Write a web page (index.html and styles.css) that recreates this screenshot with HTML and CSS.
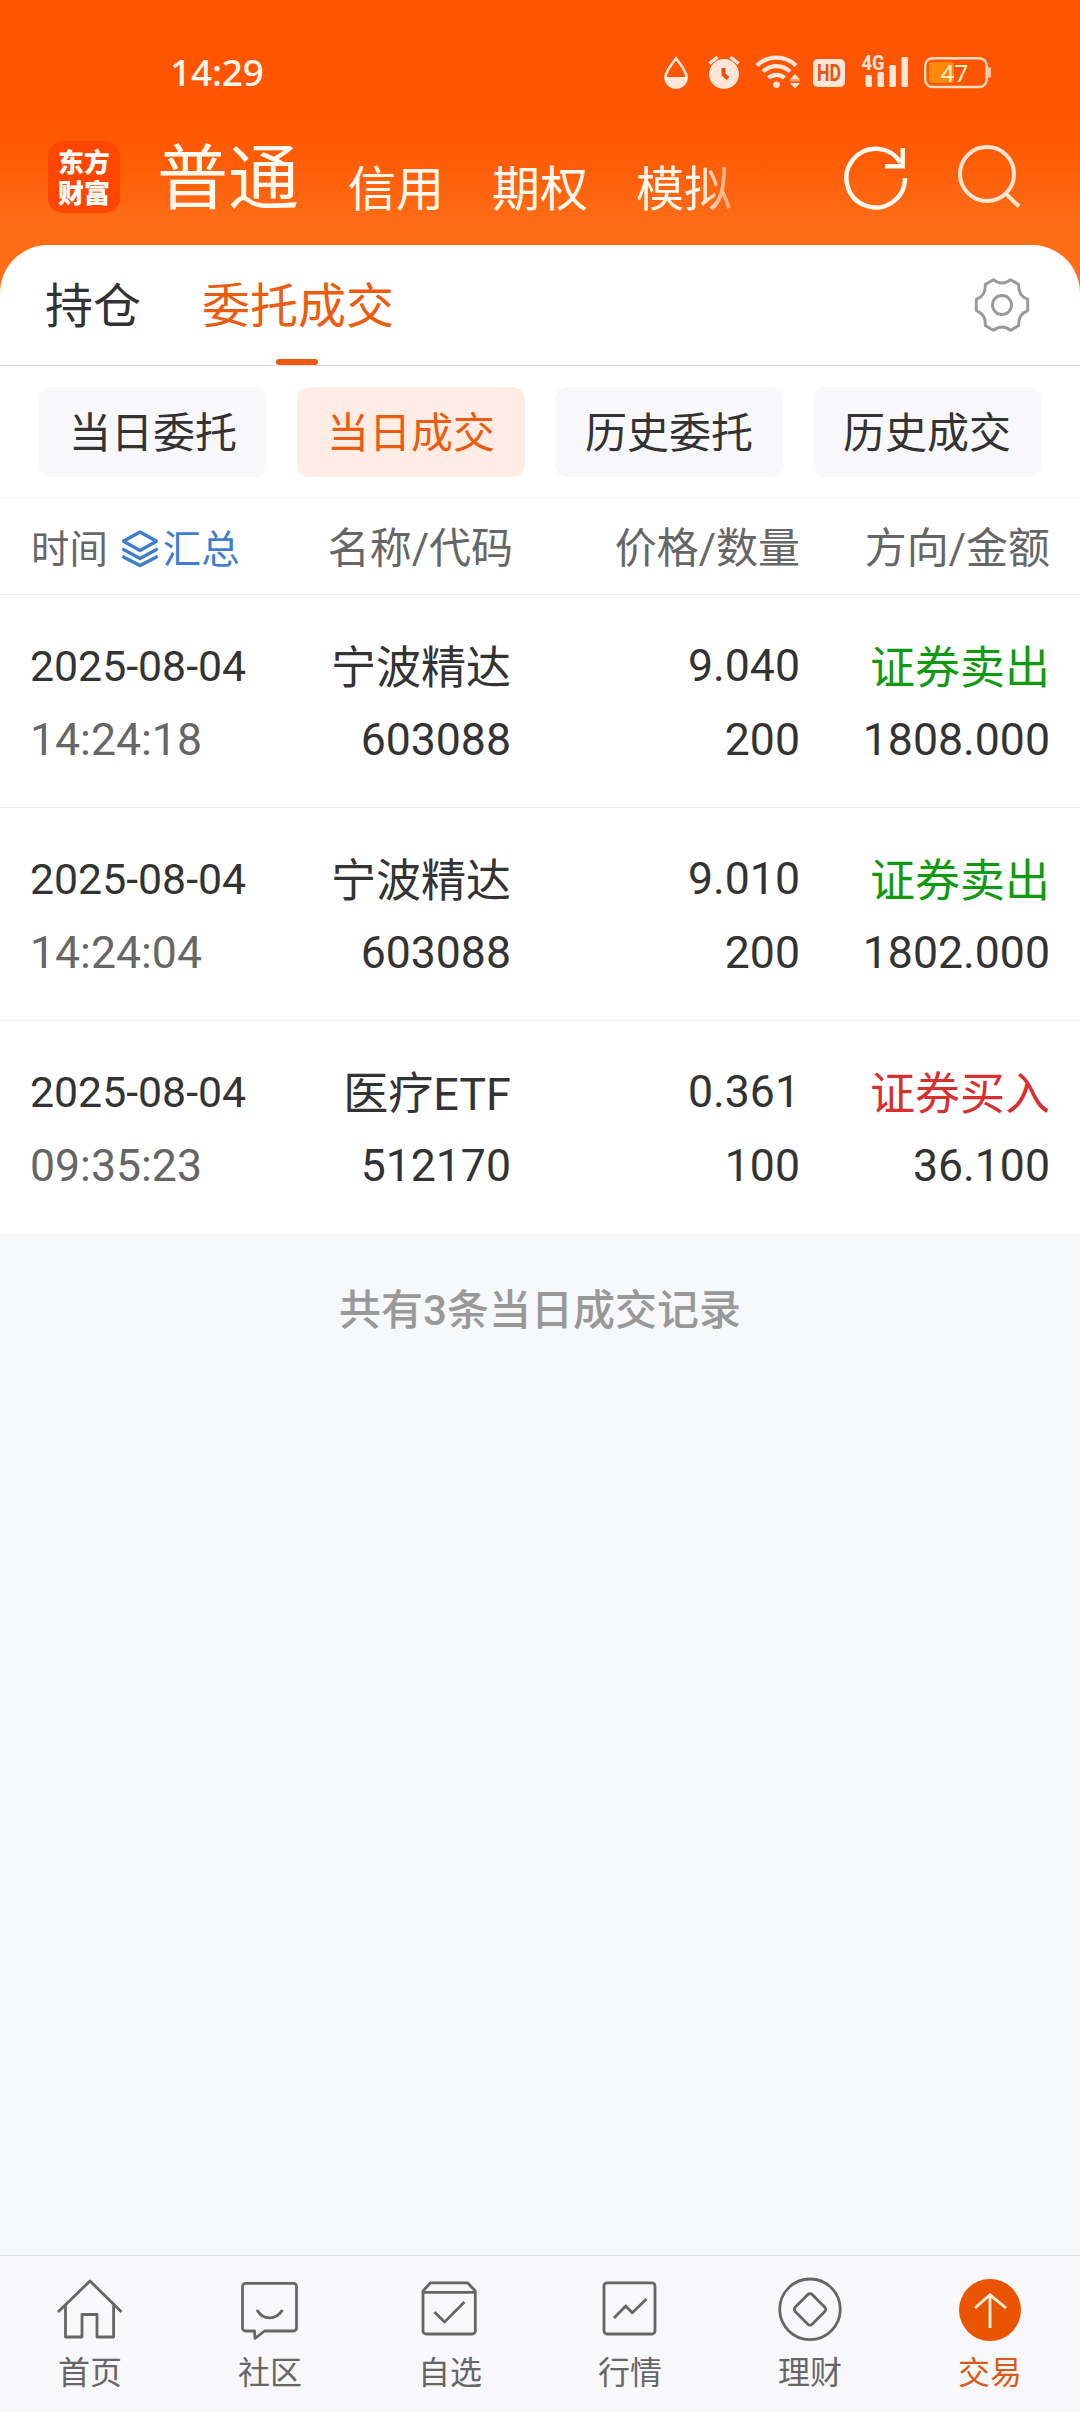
FILE: index.html
```html
<!DOCTYPE html>
<html lang="zh-CN">
<head>
<meta charset="utf-8">
<title>当日成交</title>
<link rel="stylesheet" href="styles.css">
</head>
<body>
<div class="app">
  <header class="top">
    <div class="status">
      <span class="clock">14:29</span>
      <div class="status-icons">
        <svg width="26" height="36" viewBox="663 54 26 36"><path d="M676 58.500C670 66 665.500 72 665.500 77a10.500 10.500 0 0 0 21 0C686.500 72 682 66 676 58.500Z" fill="none" stroke="#ffe6d9" stroke-width="2.800"/><path d="M665 77h22a11 11 0 0 1-22 0Z" fill="#ffe6d9"/></svg>
        <svg class="i-alarm" width="32" height="36" viewBox="708 54 32 36"><circle cx="724" cy="74" r="15" fill="#ffe6d9"/><path d="M709.500 63.500 717.500 57M738.500 63.500 730.500 57" stroke="#ffe6d9" stroke-width="3.500"/><path d="M723.500 68v6.500l4.500 4" fill="none" stroke="#f04e00" stroke-width="4"/></svg>
        <svg class="i-wifi" width="46" height="36" viewBox="755 54 46 36"><g fill="none" stroke="#ffe6d9" stroke-width="4.200"><path d="M757 65.500a28 28 0 0 1 39 0"/><path d="M763 71.500a19.500 19.500 0 0 1 27 0"/><path d="M768.500 78a12 12 0 0 1 16 0"/></g><circle cx="776.500" cy="84.700" r="3.300" fill="#ffe6d9"/><path d="M790 79.500l5-5.500 5 5.500ZM790 83l5 5.500 5-5.500ZM790 80.500h10v.8h-10Z" fill="#ffe6d9"/></svg>
        <svg class="i-hd" width="32" height="36" viewBox="813 54 32 36"><rect x="813" y="59" width="32" height="28" rx="5" fill="#ffe6d9"/><text x="829" y="81" text-anchor="middle" class="hd" textLength="24" lengthAdjust="spacingAndGlyphs">HD</text></svg>
        <svg class="i-sig" width="48" height="36" viewBox="861 54 48 36"><text x="861.500" y="70" class="gen" textLength="23" lengthAdjust="spacingAndGlyphs">4G</text><g fill="#ffe6d9"><rect x="865.500" y="75" width="6.500" height="12" rx="1.500"/><rect x="877.500" y="72" width="6.500" height="15" rx="1.500"/><rect x="889.500" y="65" width="6.500" height="22" rx="1.500"/><rect x="901.500" y="57" width="6.500" height="30" rx="1.500"/></g></svg>
        <svg class="i-bat" width="68" height="36" viewBox="924 54 68 36"><rect x="925.200" y="58.200" width="61.500" height="28.800" rx="7.500" fill="none" stroke="#ffdcc4" stroke-width="2.400"/><rect x="929" y="62" width="25" height="21" rx="3" fill="#ff8a0a"/><path d="M989.500 67.500v10" stroke="#ffdcc4" stroke-width="2.600"/><text x="954.500" y="81.500" text-anchor="middle" class="pct">47</text></svg>
      </div>
    </div>
    <div class="nav">
      <div class="logo"><span>东方</span><span>财富</span></div>
      <div class="accounts">
        <span class="main">普通</span><span>信用</span><span>期权</span><span class="fade">模拟</span>
      </div>
      <svg class="refresh" width="66" height="66" viewBox="843 145 66 66"><g fill="none" stroke="#fffaf0" stroke-width="4.400"><path d="M905 179a29.300 29.300 0 1 1-4.500-15.500"/><path d="M902.700 149v18.200H885"/></g></svg>
      <svg class="search" width="64" height="66" viewBox="957 143 64 66"><g fill="none" stroke="#ffe6d3" stroke-width="4"><circle cx="987" cy="174" r="27"/><path d="M1005 193 1019 206.500"/></g></svg>
    </div>
  </header>

  <main class="panel">
    <nav class="tabs">
      <span class="tab">持仓</span>
      <span class="tab active">委托成交</span>
      <svg class="gear" width="58" height="58" viewBox="-29 -29 58 58"><g fill="none" stroke="#999" stroke-width="2.900" stroke-linejoin="round"><path d="M-8.600-25.300Q0-18.500 8.600-25.300L16.800-20.500Q15.800-9.500 25.700-5.600V5.600Q15.800 9.500 16.800 20.500L8.600 25.300Q0 18.500-8.600 25.300L-16.800 20.500Q-15.800 9.500-25.700 5.600V-5.600Q-15.800-9.500-16.800-20.500Z"/><circle r="9.500"/></g></svg>
    </nav>
    <div class="chips">
      <span class="chip">当日委托</span><span class="chip on">当日成交</span><span class="chip">历史委托</span><span class="chip">历史成交</span>
    </div>
    <div class="row head">
      <div class="when"><span>时间</span><svg width="38" height="40" viewBox="120.500 531 38 40"><g fill="none" stroke="#3f7ecf" stroke-width="3.300" stroke-linejoin="round" stroke-linecap="round"><path d="M139.500 534 156 543.200 139.500 552.500 123 543.200Z"/><path d="M123 551.500 139.500 560.500 156 551.500M123 559 139.500 567.500 156 559"/></g></svg><span class="sum">汇总</span></div>
      <span class="name">名称/代码</span><span>价格/数量</span><span>方向/金额</span>
    </div>
    <div class="row">
      <span class="date">2025-08-04</span><span class="cn">宁波精达</span><span>9.040</span><span class="cn sell">证券卖出</span>
      <span class="time">14:24:18</span><span>603088</span><span>200</span><span>1808.000</span>
    </div>
    <div class="row">
      <span class="date">2025-08-04</span><span class="cn">宁波精达</span><span>9.010</span><span class="cn sell">证券卖出</span>
      <span class="time">14:24:04</span><span>603088</span><span>200</span><span>1802.000</span>
    </div>
    <div class="row">
      <span class="date">2025-08-04</span><span class="cn">医疗ETF</span><span>0.361</span><span class="cn buy">证券买入</span>
      <span class="time">09:35:23</span><span>512170</span><span>100</span><span>36.100</span>
    </div>
  </main>

  <p class="note">共有3条当日成交记录</p>

  <footer class="bottom">
    <div class="item"><svg width="68" height="66" viewBox="56 2276 68 66"><path d="M58 2312 90 2281 121.500 2312M65.500 2305.500V2337H82V2314.500H97V2337H113.600V2305.500"/></svg><span>首页</span></div>
    <div class="item"><svg width="68" height="66" viewBox="236 2276 68 66"><path d="M245.500 2283.300H293.500a3 3 0 0 1 3 3V2328a3 3 0 0 1-3 3H264.500L255 2338.500 254.500 2331H245.500a3 3 0 0 1-3-3V2286.300a3 3 0 0 1 3-3ZM257 2310c6 10.500 19 10.500 25.500 0"/></svg><span>社区</span></div>
    <div class="item"><svg width="68" height="66" viewBox="416 2276 68 66"><path d="M423 2291 430.500 2282.800H467.500L475.300 2291V2331a3 3 0 0 1-3 3H426a3 3 0 0 1-3-3ZM423 2292.300H475.300M434.500 2312 444.500 2322 464.500 2302"/></svg><span>自选</span></div>
    <div class="item"><svg width="68" height="66" viewBox="596 2276 68 66"><rect x="604" y="2282.800" width="51" height="51.200" rx="3"/><path d="M614 2318 625.700 2306 632.300 2312.700 646.500 2299"/></svg><span>行情</span></div>
    <div class="item"><svg width="68" height="66" viewBox="775.600 2276 68 66"><circle cx="809.600" cy="2309.300" r="30.300"/><rect x="797.600" y="2297.300" width="24" height="24" rx="3" transform="rotate(45 809.600 2309.300)"/></svg><span>理财</span></div>
    <div class="item current"><svg width="68" height="66" viewBox="956 2276 68 66"><circle cx="990" cy="2310" r="31"/><path d="M990 2328V2295M975 2308 990 2294.800 1006 2308"/></svg><span>交易</span></div>
  </footer>
</div>
</body>
</html>
```
FILE: styles.css
```css
* { box-sizing: border-box; }

body {
  margin: 0;
  font-family: Roboto, "Noto Sans CJK SC", sans-serif;
  color: #333;
}

svg { display: block; flex: none; overflow: visible; }

.app {
  width: 1080px;
  height: 2412px;
  display: flex;
  flex-direction: column;
  background: #f7f8fa;
}

.top {
  height: 310px;
  margin-bottom: -65px;
  flex: none;
  background: linear-gradient(#ff5500 0, #ff5500 124px, #ff5c06 160px, #ff6b16 218px, #ff6e17 245px);
}

.status {
  height: 124px;
  padding: 54px 88px 0 170px;
  display: flex;
  justify-content: space-between;
  align-items: flex-start;
}

.clock {
  font: 500 37px/36px "Noto Sans", sans-serif;
  letter-spacing: -0.2px;
  color: #fff7ee;
}

.status-icons { display: flex; }
.i-alarm { margin-left: 19px; }
.i-wifi { margin-left: 15px; }
.i-hd { margin-left: 12px; }
.i-sig { margin-left: 16px; }
.i-bat { margin-left: 15px; }
.hd { font: 700 23px Roboto, sans-serif; fill: #e85410; }
.gen { font: 700 20px Roboto, sans-serif; fill: #ffe6d9; }
.pct { font: 400 24px "Noto Sans", sans-serif; fill: #fff0c8; }

.nav {
  height: 106px;
  padding: 0 59px 0 48px;
  display: flex;
  align-items: center;
}

.logo {
  width: 72px;
  height: 72px;
  padding-top: 4px;
  border-radius: 15px;
  background: #ff4600;
  color: #fff;
  display: flex;
  flex-direction: column;
  align-items: center;
  font: 900 26px/31px "Noto Sans CJK SC", sans-serif;
}

.accounts {
  height: 100px;
  margin-left: 37px;
  display: flex;
  align-items: flex-start;
  gap: 48px;
  font-size: 48px;
  line-height: 126px;
  color: #fffaf0;
}

.main { font-size: 71px; line-height: 103px; margin-right: 1px; }

.fade {
  mask-image: linear-gradient(90deg, #000 62px, transparent 118px);
}

.refresh { margin-left: auto; }
.search { margin-left: 48px; margin-top: -2px; }

.panel {
  flex: none;
  background: #fff;
  border-radius: 48px 48px 0 0;
}

.tabs {
  height: 121px;
  padding: 0 49px 0 45px;
  display: flex;
  align-items: stretch;
  gap: 61px;
  border-bottom: 1px solid #dedede;
  font-size: 48px;
  line-height: 124px;
}

.tab { position: relative; height: 120px; }
.active { color: #ea5c10; }

.active::after {
  content: "";
  position: absolute;
  left: 74px;
  bottom: 0;
  width: 42px;
  height: 6px;
  border-radius: 3px;
  background: #f05a10;
}

.gear { margin: 31px 0 0 auto; }

.chips {
  height: 132px;
  padding: 21px 39px 0;
  display: grid;
  grid-template-columns: repeat(4, 228px);
  gap: 30px;
  border-bottom: 1px solid #f5f5f5;
}

.chip {
  height: 90px;
  border-radius: 12px;
  background: #f8f8fa;
  font-size: 42px;
  line-height: 94px;
  text-align: center;
}

.on { background: #ffede5; color: #ea5c10; }

.row {
  height: 213px;
  padding: 35px 30px 0;
  display: grid;
  grid-template-columns: 216px 265px 289px 250px;
  grid-auto-rows: 74px;
  border-bottom: 1px solid #ececec;
  font-size: 44.6px;
  line-height: 72px;
  text-align: right;
  white-space: nowrap;
}

.row:last-child { border-bottom: 0; }

.cn { font-size: 45px; line-height: 77px; }

.head {
  height: 97px;
  padding-top: 13px;
  font-size: 42px;
  line-height: 75px;
  color: #666;
}

.name { margin-right: -2px; }

.when {
  padding: 2px 0 0 1px;
  display: flex;
  align-items: center;
  font-size: 38.4px;
}

.when svg { margin-left: 13px; }
.sum { margin-left: 4px; color: #3f7ecf; }

.date, .time { text-align: left; }
.date { font-size: 42.8px; }
.time { color: #666; }
.sell { color: #109a10; }
.buy { color: #d83030; }

.note {
  margin: 46px 0 0;
  font-size: 42px;
  font-weight: 500;
  line-height: 62px;
  text-align: center;
  color: #999;
}

.bottom {
  height: 157px;
  margin-top: auto;
  padding-top: 20px;
  display: grid;
  grid-template-columns: repeat(6, 180px);
  border-top: 1px solid #dfe2e4;
  background: #f8f8fa;
}

.item {
  display: flex;
  flex-direction: column;
  align-items: center;
  font-size: 32px;
  line-height: 63px;
  color: #666;
}

.item svg { fill: none; stroke: #666; stroke-width: 2.8; stroke-linejoin: round; }
.current { color: #dc5a18; }
.item.current svg { stroke: #fff3e0; stroke-linejoin: miter; }
.current circle { fill: #ea5400; stroke: none; }
```
